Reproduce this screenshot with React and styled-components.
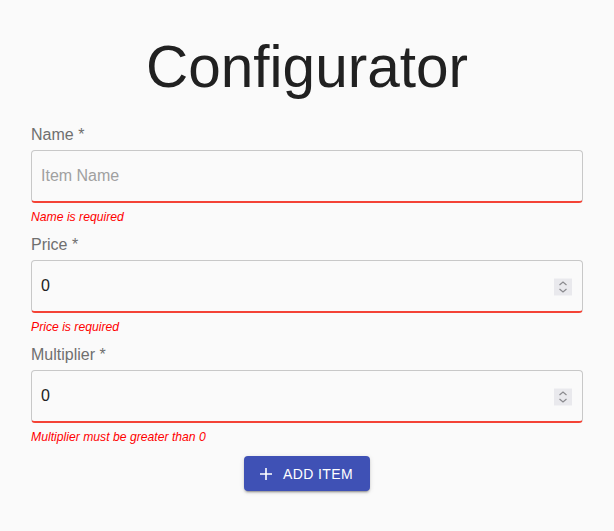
import React from 'react';
import styled, { createGlobalStyle } from 'styled-components';

const GlobalStyle = createGlobalStyle`
  html, body {
    margin: 0;
    padding: 0;
    background-color: #fafafa;
    font-family: "Liberation Sans", Arial, sans-serif;
  }
`;

const Page = styled.div`
  width: 614px;
  min-height: 531px;
  background-color: #fafafa;
  display: flex;
  flex-direction: column;
  align-items: center;
`;

const Title = styled.h1`
  margin: 32px 0 23px;
  font-size: 58.5px;
  font-weight: 400;
  color: #212121;
  line-height: 70px;
`;

const Form = styled.form`
  width: 552px;
  display: flex;
  flex-direction: column;
`;

const Field = styled.div`
  display: flex;
  flex-direction: column;
  margin-bottom: 11px;
`;

const Label = styled.label`
  font-size: 16px;
  color: #6f6f6f;
  line-height: 20px;
  margin-bottom: 5px;
`;

const InputWrap = styled.div`
  position: relative;
`;

const Input = styled.input`
  box-sizing: border-box;
  width: 100%;
  height: 53px;
  padding: 0 9px;
  font-family: "Liberation Sans", Arial, sans-serif;
  font-size: 16px;
  color: #212121;
  background: #fafafa;
  border: 1px solid #c8c8c8;
  border-bottom: 2px solid ${(props) => (props.$error ? '#f44336' : '#c8c8c8')};
  border-radius: 4px;
  outline: none;
  -moz-appearance: textfield;

  &::placeholder {
    color: #a0a0a0;
  }

  &::-webkit-inner-spin-button,
  &::-webkit-outer-spin-button {
    -webkit-appearance: none;
    margin: 0;
  }
`;

const Spinner = styled.span`
  position: absolute;
  right: 11px;
  top: 50%;
  transform: translateY(-50%);
  width: 18px;
  height: 17px;
  background: #e9e9ed;
  display: flex;
  align-items: center;
  justify-content: center;
  pointer-events: none;
`;

const ErrorText = styled.span`
  font-size: 12.2px;
  font-style: italic;
  color: #f00;
  line-height: 14px;
  margin-top: 7px;
`;

const Button = styled.button`
  align-self: center;
  margin-top: 1px;
  display: flex;
  align-items: center;
  gap: 10px;
  height: 35px;
  padding: 0 17px 0 15px;
  border: none;
  border-radius: 4px;
  background-color: #3f51b5;
  color: #fff;
  font-family: "Liberation Sans", Arial, sans-serif;
  font-size: 14px;
  letter-spacing: 0.4px;
  text-transform: uppercase;
  box-shadow: 0 3px 1px -2px rgba(0,0,0,0.2), 0 2px 2px 0 rgba(0,0,0,0.14), 0 1px 5px 0 rgba(0,0,0,0.12);
  cursor: pointer;
`;

const fields = [
  { label: 'Name', type: 'text', placeholder: 'Item Name', value: '', error: 'Name is required' },
  { label: 'Price', type: 'number', value: '0', error: 'Price is required' },
  { label: 'Multiplier', type: 'number', value: '0', error: 'Multiplier must be greater than 0' },
];

const SpinIcon = () => (
  <svg width="10" height="13" viewBox="0 0 10 13">
    <path d="M1.5 4.5L5 1.5l3.5 3M1.5 8.5L5 11.5l3.5-3" fill="none" stroke="#8a8a8e" strokeWidth="1.2" />
  </svg>
);

const App = () => (
  <Page>
    <GlobalStyle />
    <Title>Configurator</Title>
    <Form onSubmit={(e) => e.preventDefault()}>
      {fields.map((f) => (
        <Field key={f.label}>
          <Label>{f.label} *</Label>
          <InputWrap>
            <Input
              $error
              type={f.type}
              placeholder={f.placeholder}
              defaultValue={f.value}
            />
            {f.type === 'number' && (
              <Spinner>
                <SpinIcon />
              </Spinner>
            )}
          </InputWrap>
          <ErrorText>{f.error}</ErrorText>
        </Field>
      ))}
      <Button type="submit">
        <svg width="14" height="14" viewBox="0 0 14 14">
          <path d="M7 1v12M1 7h12" stroke="#fff" strokeWidth="1.6" />
        </svg>
        Add Item
      </Button>
    </Form>
  </Page>
);

export default App;
